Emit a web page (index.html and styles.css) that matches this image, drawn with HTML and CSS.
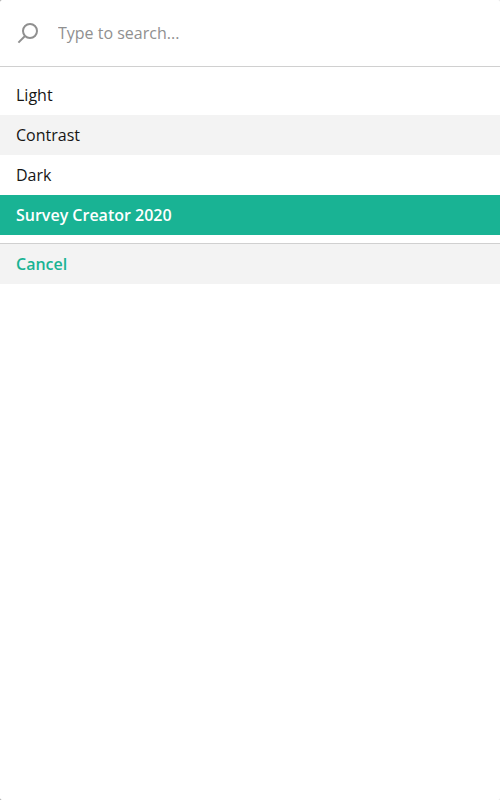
FILE: index.html
```
<!DOCTYPE html>
<html lang="en">
<head>
<meta charset="utf-8">
<title>Themes</title>
<link rel="stylesheet" href="styles.css">
</head>
<body>
<div class="popup">
  <div class="search">
    <svg class="search-icon" viewBox="0 0 24 24" width="24" height="24"><circle cx="14" cy="10" r="7"/><path d="M9 15L2.4 21.6"/></svg>
    <input class="search-input" type="text" placeholder="Type to search..." aria-label="Search">
  </div>
  <ul class="list">
    <li class="item">Light</li>
    <li class="item item-hover">Contrast</li>
    <li class="item">Dark</li>
    <li class="item item-selected">Survey Creator 2020</li>
  </ul>
  <button class="cancel" type="button">Cancel</button>
</div>
</body>
</html>
```

FILE: styles.css
```
* { box-sizing: border-box; }
html { background: linear-gradient(90deg, #999, #e4e4e4); }
body { margin: 0; font: 16px/24px "Open Sans", sans-serif; color: #161616; }
.popup { height: 100vh; background: #fff; border-radius: 2px; overflow: hidden; }
.search { display: flex; align-items: center; gap: 18px; height: 67px; padding: 0 16px; border-bottom: 1px solid #d0d0d0; }
.search-icon { flex: none; fill: none; stroke: #909090; stroke-width: 2; }
.search-input { flex: 1; min-width: 0; padding: 0; border: 0; outline: 0; background: transparent; font: inherit; }
.search-input::placeholder { color: #909090; opacity: 1; }
.list { margin: 0; padding: 8px 0; list-style: none; }
.item { height: 40px; padding: 8px 16px; }
.item-hover { background: #f3f3f3; }
.item-selected { background: #19b394; color: #fff; font-weight: 600; }
.cancel { display: block; width: 100%; height: 41px; padding: 8px 16px; border: 0; border-top: 1px solid #d0d0d0; background: #f3f3f3; color: #19b394; font: inherit; font-weight: 600; text-align: left; }
```
